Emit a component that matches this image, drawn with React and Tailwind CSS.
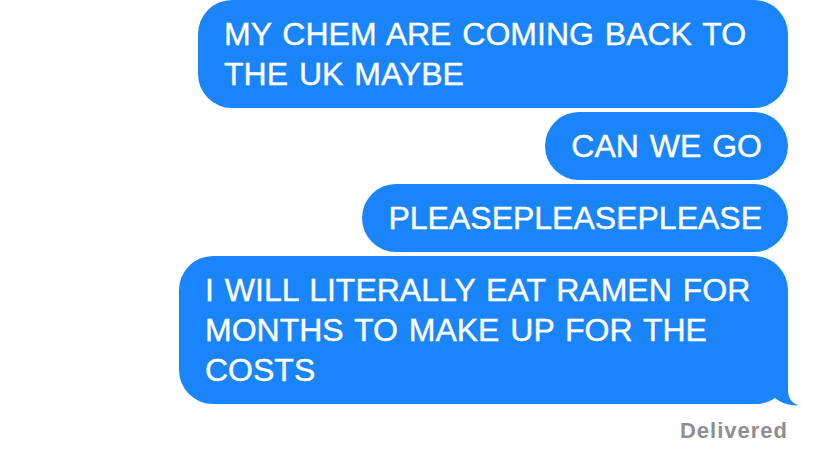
const bubble = 'rounded-[34px] bg-[#1a84fb] px-[26px] py-[14px] text-[32px] leading-[40px] text-white whitespace-nowrap [word-spacing:2px] [-webkit-text-stroke:0.4px_white]'

function Tail() {
  return (
    <svg
      className="absolute bottom-[-3px] right-[-14px] h-[37px] w-[52px]"
      viewBox="0 0 52 37"
      aria-hidden="true"
    >
      <path
        d="M0 0 H38 V20 C38 29 43 34 49 35 C42 36 32 34 25 28 C20 32 12 34 5 34 H0 Z"
        fill="#1a84fb"
      />
    </svg>
  )
}

export default function App() {
  return (
    <main className="h-[458px] w-[828px] overflow-hidden bg-white font-['Liberation_Sans',Arial,sans-serif]">
      <div className="flex flex-col items-end gap-1 pr-[40px]">
        <div className={`${bubble} w-[590px]`}>
          MY CHEM ARE COMING BACK TO
          <br />
          THE UK MAYBE
        </div>
        <div className={`${bubble} w-fit`}>CAN WE GO</div>
        <div className={`${bubble} w-fit`}>PLEASEPLEASEPLEASE</div>
        <div className={`${bubble} relative w-[609px]`}>
          I WILL LITERALLY EAT RAMEN FOR
          <br />
          MONTHS TO MAKE UP FOR THE
          <br />
          COSTS
          <Tail />
        </div>
        <p className="mt-[10px] text-[22px] font-bold leading-[26px] tracking-[1px] text-[#8e8e93]">Delivered</p>
      </div>
    </main>
  )
}
